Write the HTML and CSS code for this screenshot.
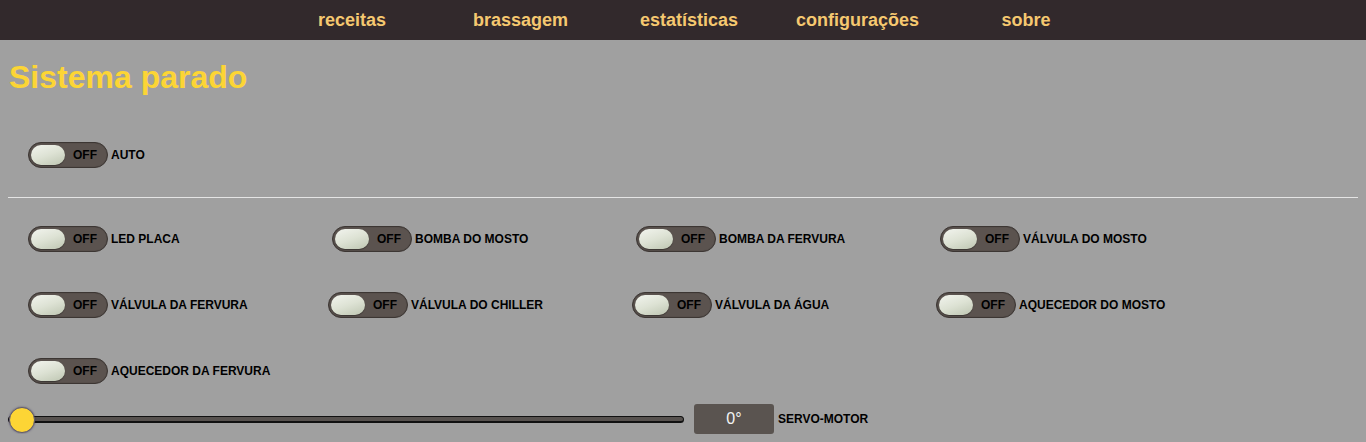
FILE: index.html
```html
<!DOCTYPE html>
<html lang="pt">
<head>
<meta charset="utf-8">
<title>Sistema</title>
<link rel="stylesheet" href="styles.css">
</head>
<body>
<nav class="nav">
  <a class="nav-link" href="#">receitas</a>
  <a class="nav-link" href="#">brassagem</a>
  <a class="nav-link" href="#">estatísticas</a>
  <a class="nav-link" href="#">configurações</a>
  <a class="nav-link" href="#">sobre</a>
</nav>
<main class="main">
  <h1 class="title">Sistema parado</h1>

  <div class="row row-auto">
    <div class="cell">
      <span class="toggle"><span class="knob"></span><span class="state">OFF</span></span>
      <span class="label">AUTO</span>
    </div>
  </div>

  <hr class="divider">

  <div class="row row-first">
    <div class="cell"><span class="toggle"><span class="knob"></span><span class="state">OFF</span></span><span class="label">LED PLACA</span></div>
    <div class="cell"><span class="toggle"><span class="knob"></span><span class="state">OFF</span></span><span class="label">BOMBA DO MOSTO</span></div>
    <div class="cell"><span class="toggle"><span class="knob"></span><span class="state">OFF</span></span><span class="label">BOMBA DA FERVURA</span></div>
    <div class="cell"><span class="toggle"><span class="knob"></span><span class="state">OFF</span></span><span class="label">VÁLVULA DO MOSTO</span></div>
  </div>

  <div class="row">
    <div class="cell cell-narrow"><span class="toggle"><span class="knob"></span><span class="state">OFF</span></span><span class="label">VÁLVULA DA FERVURA</span></div>
    <div class="cell"><span class="toggle"><span class="knob"></span><span class="state">OFF</span></span><span class="label">VÁLVULA DO CHILLER</span></div>
    <div class="cell"><span class="toggle"><span class="knob"></span><span class="state">OFF</span></span><span class="label">VÁLVULA DA ÁGUA</span></div>
    <div class="cell"><span class="toggle"><span class="knob"></span><span class="state">OFF</span></span><span class="label">AQUECEDOR DO MOSTO</span></div>
  </div>

  <div class="row">
    <div class="cell"><span class="toggle"><span class="knob"></span><span class="state">OFF</span></span><span class="label">AQUECEDOR DA FERVURA</span></div>
  </div>

  <div class="servo">
    <input class="slider" type="range" min="0" max="180" value="0">
    <span class="servo-value">0°</span>
    <span class="label">SERVO-MOTOR</span>
  </div>
</main>
</body>
</html>
```

FILE: styles.css
```css
html, body {
  margin: 0;
  padding: 0;
}
body {
  background: #a0a0a0;
  font-family: "Liberation Sans", Arial, sans-serif;
  color: #000;
  overflow: hidden;
}
.nav {
  height: 40px;
  background: #32292c;
  display: flex;
  justify-content: center;
  align-items: center;
  padding-left: 12px;
}
.nav-link {
  width: 168.5px;
  text-align: center;
  color: #f5c870;
  font-weight: bold;
  font-size: 18px;
  text-decoration: none;
  line-height: 40px;
}
.main {
  padding: 0 8px;
}
.title {
  margin: 19px 0 0 1px;
  font-size: 32px;
  line-height: 36px;
  color: #fcd535;
  font-weight: bold;
}
.row {
  display: flex;
  padding-left: 20px;
  height: 26px;
  margin-top: 40px;
}
.row-auto {
  margin-top: 47px;
}
.row-first {
  margin-top: 28px;
}
.cell {
  width: 304px;
  display: flex;
  align-items: center;
  flex: none;
}
.cell-narrow {
  width: 300px;
}
.toggle {
  box-sizing: border-box;
  width: 80px;
  height: 26px;
  border-radius: 13px;
  background: #5b534f;
  border: 1px solid #3c3633;
  box-shadow: inset 0 0 1px rgba(0,0,0,0.4);
  display: flex;
  align-items: center;
  padding: 0 2px;
  flex: none;
}
.knob {
  width: 34px;
  height: 20px;
  border-radius: 10px;
  background: linear-gradient(160deg, #f2f4ee 0%, #dde2d4 50%, #bec6b2 100%);
  box-shadow: 0 1px 1px rgba(0,0,0,0.35);
}
.state {
  margin-left: auto;
  margin-right: 8px;
  font-size: 12px;
  font-weight: bold;
  color: #000;
}
.label {
  margin-left: 3px;
  font-size: 12px;
  font-weight: bold;
  color: #000;
  white-space: nowrap;
}
.divider {
  border: 0;
  border-top: 1px solid #e4e4e4;
  height: 0;
  margin: 29px 0 0;
}
.servo {
  display: flex;
  align-items: center;
  margin-top: 20px;
  height: 30px;
}
.slider {
  -webkit-appearance: none;
  appearance: none;
  width: 676px;
  height: 26px;
  margin: 0;
  padding: 0;
  background: transparent;
}
.slider::-webkit-slider-runnable-track {
  height: 7px;
  background: #57524f;
  border: 1px solid #111;
  border-bottom-width: 2px;
  border-radius: 5px;
}
.slider::-webkit-slider-thumb {
  -webkit-appearance: none;
  width: 26px;
  height: 26px;
  border-radius: 50%;
  background: #fdd535;
  border: 1px solid #5d5a70;
  box-shadow: 0 0 2px rgba(40,30,80,0.6);
  margin-top: -10px;
}
.servo-value {
  box-sizing: border-box;
  width: 80px;
  height: 30px;
  margin-left: 10px;
  border-radius: 3px;
  background: #5a5450;
  color: #f4f4f4;
  font-size: 16px;
  display: flex;
  align-items: center;
  justify-content: center;
}
.servo .label {
  margin-left: 4px;
}
```
